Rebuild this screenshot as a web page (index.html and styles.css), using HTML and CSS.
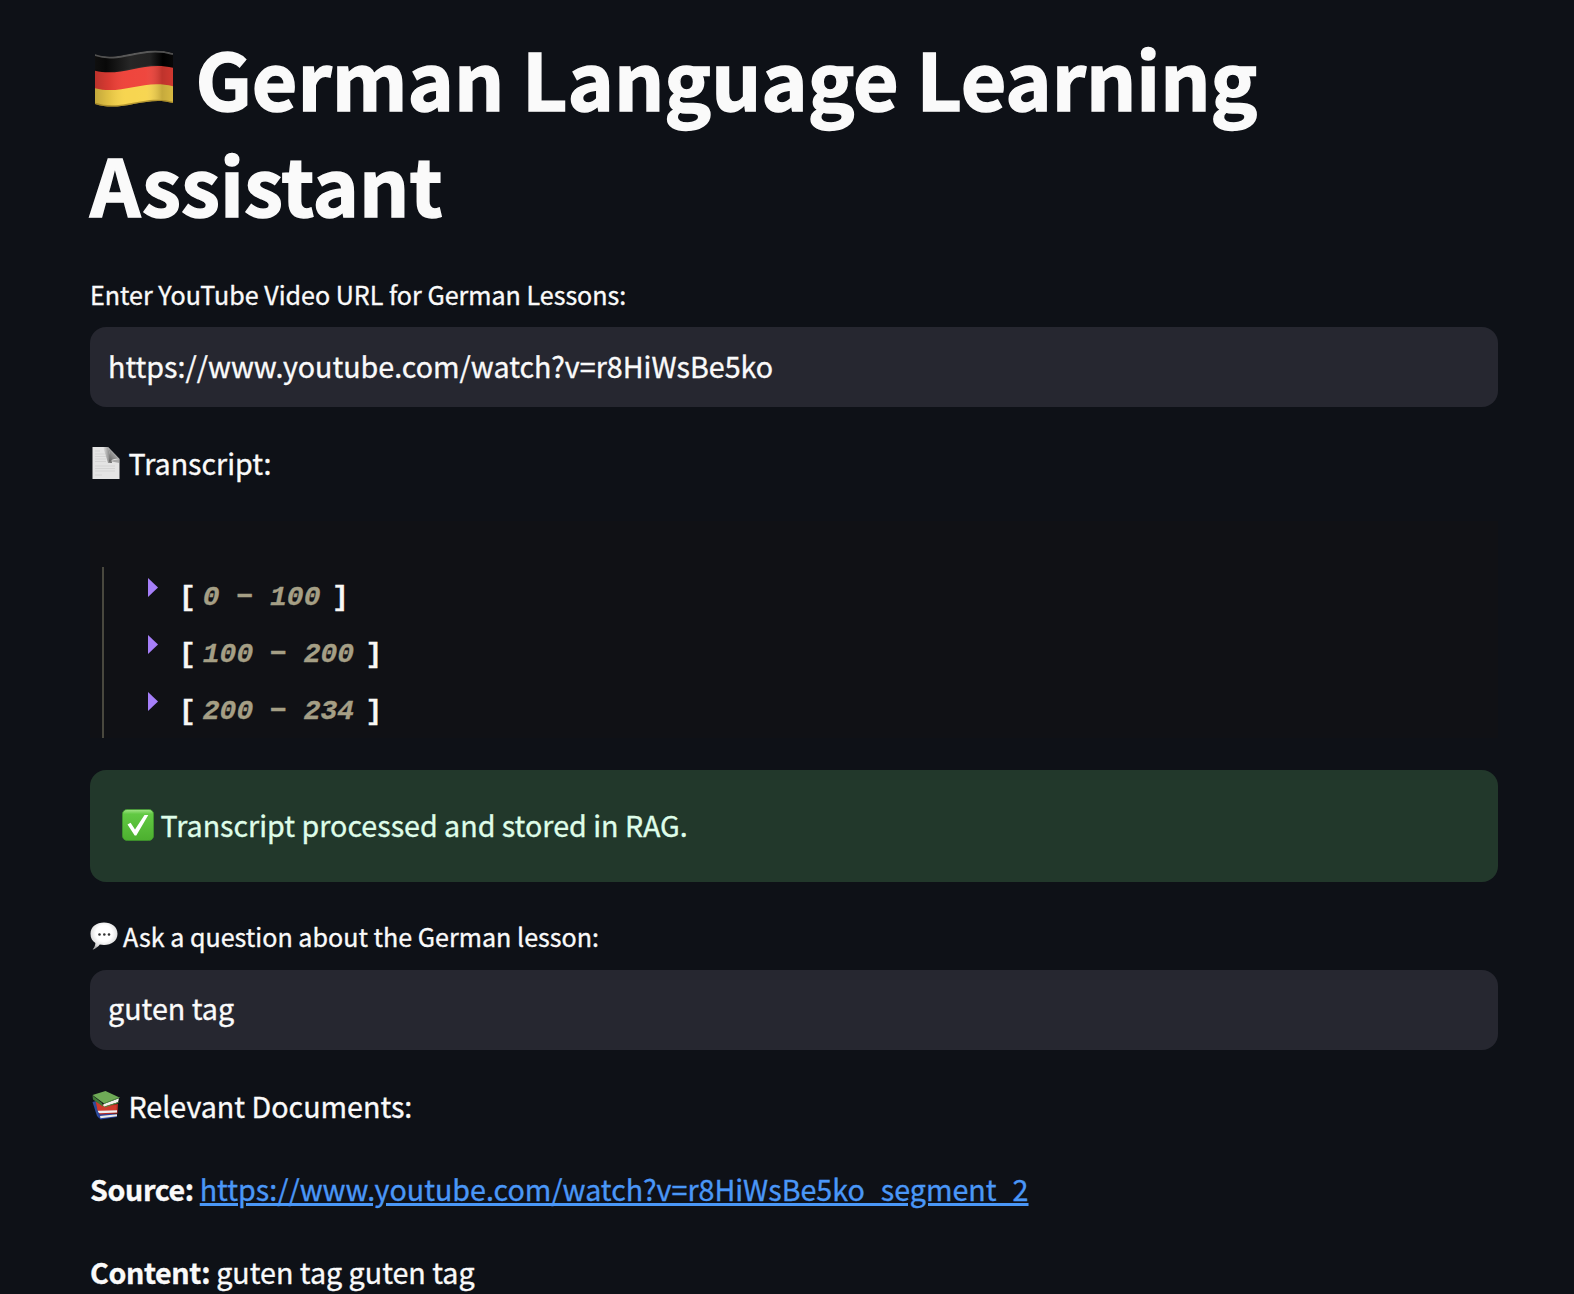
FILE: index.html
```html
<!DOCTYPE html>
<html lang="en">
<head>
<meta charset="utf-8">
<title>German Language Learning Assistant</title>
<link rel="stylesheet" href="styles.css">
</head>
<body>
<main class="page">
  <h1 class="title">
    <span class="title-line"><svg class="flag" viewBox="0 0 80 58" width="80" height="58">
      <defs>
        <linearGradient id="fold" x1="0" x2="1" y1="0" y2="0">
          <stop offset="0" stop-color="#000" stop-opacity=".22"/>
          <stop offset=".2" stop-color="#000" stop-opacity=".08"/>
          <stop offset=".4" stop-color="#fff" stop-opacity=".03"/>
          <stop offset=".65" stop-color="#fff" stop-opacity=".04"/>
          <stop offset=".85" stop-color="#000" stop-opacity=".2"/>
          <stop offset="1" stop-color="#000" stop-opacity=".12"/>
        </linearGradient>
        <linearGradient id="blk" x1="0" x2="1" y1="0" y2="0">
          <stop offset="0" stop-color="#101010"/><stop offset=".15" stop-color="#080808"/>
          <stop offset=".45" stop-color="#262626"/><stop offset=".7" stop-color="#222"/>
          <stop offset=".86" stop-color="#000"/><stop offset="1" stop-color="#080808"/>
        </linearGradient>
        <clipPath id="cloth"><path d="M1 5C26 14 48-5 79 4V54C52 46 28 64 1 55Z"/></clipPath>
      </defs>
      <g clip-path="url(#cloth)">
        <path fill="url(#blk)" d="M0 0H80V26H0Z"/>
        <path fill="#ee4037" d="M0 21.500C28 29 50 11 80 19V46H0Z"/>
        <path fill="#f7d44b" d="M0 39C28 47 50 29 80 37.500V58H0Z"/>
        <path fill="url(#fold)" d="M0 20C28 28 50 10 80 18V58H0Z"/>
        <path fill="none" stroke="#777" stroke-opacity=".65" stroke-width="2" d="M1 6C26 15 48-4 79 5"/>
        <path fill="none" stroke="#8c701c" stroke-opacity=".6" stroke-width="2.500" d="M1 55C28 64 52 46 79 54"/>
      </g>
    </svg><span class="t1">German Language Learning</span></span>
    <span class="title-line"><span class="t2">Assistant</span></span>
  </h1>

  <label class="label label-url"><span>Enter YouTube Video URL for German Lessons:</span></label>
  <div class="field"><span>https://www.youtube.com/watch?v=r8HiWsBe5ko</span></div>

  <p class="line"><svg class="doc" viewBox="0 0 28 32" width="28" height="32">
      <defs><linearGradient id="curl" x1="0" y1="1" x2="1" y2="0"><stop offset="0" stop-color="#555"/><stop offset=".5" stop-color="#999"/><stop offset="1" stop-color="#eee"/></linearGradient>
      <linearGradient id="shade" x1="0" y1="0" x2="1" y2="0"><stop offset="0" stop-color="#444" stop-opacity="0"/><stop offset="1" stop-color="#444" stop-opacity=".8"/></linearGradient></defs>
      <path fill="#e4e4e4" d="M.5 0H16L27.500 12V32H.5Z"/>
      <path fill="url(#shade)" d="M11 0H16L20 16H16Z"/>
      <path fill="#777" fill-opacity=".55" d="M17 14L27.500 12V16Z"/>
      <path fill="url(#curl)" d="M15.500 0C18 4 18 9 17 15C20 12 24 11 27.500 12Z"/>
      <path stroke="#cfcfcf" stroke-width=".8" d="M3 4h5M3 7h10M3 9.500h11M3 12h11M3 14.500h11M3 19h20M3 21.500h20M3 24h20M3 28h7"/>
    </svg><span>Transcript:</span></p>

  <section class="json">
    <div class="tree">
      <div class="node"><i class="arrow"></i><b>[</b><em>0 − 100</em><b>]</b></div>
      <div class="node"><i class="arrow"></i><b>[</b><em>100 − 200</em><b>]</b></div>
      <div class="node"><i class="arrow"></i><b>[</b><em>200 − 234</em><b>]</b></div>
    </div>
  </section>

  <div class="alert"><svg class="check" viewBox="0 0 32 32" width="32" height="32">
      <defs><linearGradient id="grn" x1="0" y1="0" x2="0" y2="1"><stop offset="0" stop-color="#a5e58a"/><stop offset=".15" stop-color="#62c943"/><stop offset="1" stop-color="#4caf2f"/></linearGradient></defs>
      <rect x=".4" y=".4" width="31.200" height="31.200" rx="5" fill="url(#grn)" stroke="#3f982c" stroke-width=".8"/>
      <path fill="#fff" d="M5.500 15.500L8.600 13.800L13 20.500L22.500 6H26.300L14.300 26.500H12.700Z"/>
    </svg><span>Transcript processed and stored in RAG.</span></div>

  <label class="label label-ask"><svg class="bubble" viewBox="0 0 28 28" width="28" height="28">
      <defs><radialGradient id="bub" cx=".5" cy=".4" r=".6"><stop offset=".5" stop-color="#fff"/><stop offset=".85" stop-color="#dcdcdc"/><stop offset="1" stop-color="#a8a8a8"/></radialGradient></defs>
      <path fill="url(#bub)" d="M14 .5C21.500.5 27.500 4.500 27.500 11.800S21.500 23 14 23C12.500 23 11 22.900 9.800 22.600C8 25 5.500 26.800 3.200 27.600C2.700 27.700 2.600 27.200 3 26.900C4.400 25.500 5.300 23.500 5.400 21C2.200 19.200.5 16 .5 11.800C.5 4.500 6.500.5 14 .5Z"/>
      <g fill="#333"><circle cx="9.500" cy="12.500" r="1.300"/><circle cx="14.300" cy="12.500" r="1.300"/><circle cx="19" cy="12.500" r="1.300"/></g>
    </svg><span class="ask-text">Ask a question about the German lesson:</span></label>
  <div class="field field-ask"><span>guten tag</span></div>

  <p class="line"><svg class="books" viewBox="0 0 28 29" width="28" height="29">
      <path fill="#2d4c9a" d="M.5 11L4 10L8 20L7.500 27.500L5 25Z"/>
      <path fill="#2743a0" d="M6 21L24.500 23.500L25 26L8.500 28.500L6.500 26Z"/>
      <path fill="#e8e8e8" d="M8 25L25 23.300V25.300L8.500 27.300Z"/>
      <path fill="#b52a25" d="M3.500 11L12 14L26 13L25.500 22.500L7.500 23.500Z"/>
      <path fill="#eee" d="M6 19.500L25 19.300V21.500L8 22.300C6.500 22 5.700 21 6 19.500Z"/>
      <path fill="#cf3b2d" d="M4 10.500L13 15L24.500 14V19L5.500 19.500Z"/>
      <path fill="#3f7a35" d="M.5 4.500L10 12L11.500 16L1 8.500Z"/>
      <path fill="#6fab57" d="M.5 4L13.500 0L27.500 6.500L12 12.500Z"/>
      <path fill="#f1f1ec" d="M12 12.700L27 7.300L26 11.200L12.500 15.500C10.800 15 10.900 13.500 12 12.700Z"/>
      <path fill="none" stroke="#4d8b3f" stroke-width="1" d="M27.500 6.500L12 12.500M26.500 11.500L12.500 16"/>
    </svg><span>Relevant Documents:</span></p>
  <p class="line"><strong>Source:</strong><a class="link" href="#">https://www.youtube.com/watch?v=r8HiWsBe5ko_segment_2</a></p>
  <p class="line"><strong>Content:</strong><span>guten tag guten tag</span></p>
</main>
</body>
</html>
```
FILE: styles.css
```css
* { box-sizing: border-box; }
html, body { margin: 0; height: 1294px; overflow: hidden; background: #0e1117; }
body {
  color: #fafafa;
  font-family: "Noto Sans CJK SC", "Noto Sans", sans-serif;
  font-size: 28.65px;
  line-height: 51px;
  -webkit-text-stroke: .35px currentColor;
}
.page { display: flex; flex-direction: column; padding: 25px 76px 0 90px; }
.page span, .page strong, .link { white-space: pre; }

.title {
  margin: 0; font-size: 78.6px; line-height: 105.5px; font-weight: 700;
  -webkit-text-stroke: 1.5px currentColor;
}
.title-line { display: flex; height: 106px; }
.t1 { letter-spacing: -.02px; }
.t2 { letter-spacing: .1px; }
.flag { flex: none; margin: 24px 21.5px 0 4px; }

.label { display: flex; height: 44px; font-size: 25.07px; line-height: 44px; }
.label-url { margin: 35px 0 11px; }
.label-ask { margin: 32px 0 12px; }
.ask-text { letter-spacing: .02px; }
.bubble { flex: none; margin: 8px 5px 0 0; }

.field {
  height: 80px; padding: 13px 18px 0; border-radius: 16px;
  background: #262730;
}
.field-ask { padding-top: 12px; }

.line { display: flex; height: 51px; margin: 30px 0 0; }
.line + .line { margin-top: 32px; }
.doc { flex: none; margin: 10px 8.5px 0 2px; }
.books { flex: none; margin: 11px 8.5px 0 2px; }

.json { height: 217px; margin-top: 33px; padding: 46px 0 0 12px; background: #101115; }
.tree { height: 171px; border-left: 2px solid #49483e; }
.node {
  display: flex; height: 57px; padding-left: 44px;
  font: 700 28px/61px "Liberation Mono", monospace;
}
.arrow {
  width: 10px; height: 19px; margin: 11px 21px 0 0; background: #a67ff9;
  clip-path: polygon(0 0, 100% 50%, 0 100%);
}
.node em { color: #a59f85; margin: 0 11.5px 0 7px; white-space: pre; }
.node b { color: #f9f8f5; }

.alert {
  display: flex; height: 112px; margin-top: 32px; padding: 29px 32px 0;
  border-radius: 16px; background: #22382b; color: #dffde9;
}
.check { flex: none; margin: 10px 6.5px 0 0; }

strong { letter-spacing: -.38px; margin-right: 6px; }
.link {
  color: #4a97f7; text-decoration: underline;
  text-decoration-thickness: 3px; text-underline-offset: 2px;
}
```
